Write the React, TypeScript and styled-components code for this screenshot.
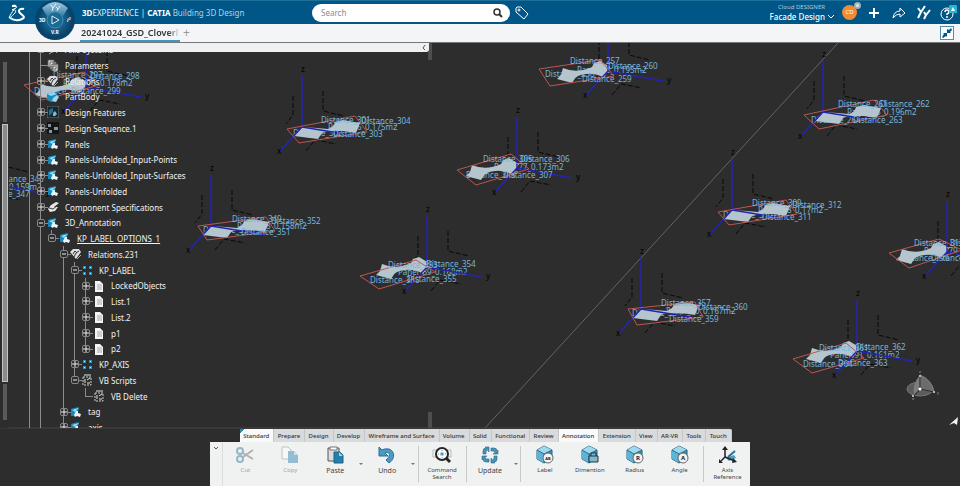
import React from "react";
import styled, { createGlobalStyle, css } from "styled-components";

const GlobalStyle = createGlobalStyle`
  *, *::before, *::after { box-sizing: border-box; }
  body { margin: 0; background: #2d2d2d; font-family: "Noto Sans", "Open Sans", sans-serif; }
  button, input, a { font: inherit; color: inherit; }
  button { border: 0; padding: 0; background: none; }
  svg { display: block; }
`;

/* ---------- layout ---------- */

const Shell = styled.div`
  display: flex;
  flex-direction: column;
  height: 100vh;
  overflow: hidden;
`;

const Header = styled.header`
  position: relative;
  z-index: 2;
  display: flex;
  flex: none;
  align-items: center;
  height: 24px;
  background: #005686;
  border-top: 1px solid #1b6f99;
  color: #fff;
`;

const HeaderSide = styled.div<{ $end?: boolean }>`
  display: flex;
  flex: ${(p) => (p.$end ? "1" : "0 0 32.5%")};
  align-items: center;
  justify-content: ${(p) => (p.$end ? "flex-end" : "flex-start")};
  gap: ${(p) => (p.$end ? "8px" : "0")};
  padding: ${(p) => (p.$end ? "0 3px 0 0" : "0 0 0 8px")};
  white-space: nowrap;
`;

const CompassButton = styled.button`
  position: absolute;
  left: 34px;
  top: -2px;
  width: 42px;
  height: 42px;
`;

const Brand = styled.h1`
  margin: 0 0 0 56px;
  font: 400 8px/16px "Noto Sans", sans-serif;
  color: #e4eff6;
  b { color: #fff; }
  small { font-size: 8px; color: #b3d1e4; }
`;

const SearchArea = styled.div`
  display: flex;
  align-items: center;
  gap: 3px;
`;

const SearchForm = styled.form`
  display: flex;
  align-items: center;
  width: 198px;
  height: 18px;
  padding: 0 4px 0 9px;
  border-radius: 9px;
  background: #fff;
  color: #333;
`;

const SearchInput = styled.input`
  flex: 1;
  min-width: 0;
  padding: 0;
  border: 0;
  outline: 0;
  background: none;
  font-size: 8px;
  &::placeholder { color: #8b8b8b; opacity: 1; }
`;

const RoleButton = styled.button`
  display: grid;
  justify-items: end;
  font-size: 8px;
  line-height: 12px;
  small { margin-right: 9px; font-size: 6px; line-height: 8px; color: #a9cbe0; }
  span { display: flex; align-items: center; gap: 3px; font-weight: 500; }
`;

const IconButton = styled.button`
  display: grid;
  place-items: center;
  width: 17px;
  height: 18px;
`;

const Avatar = styled.button`
  position: relative;
  width: 15px;
  height: 15px;
  border-radius: 50%;
  background: #f28b30;
  color: #fff;
  font-size: 6px;
  line-height: 15px;
  &::after {
    content: "";
    position: absolute;
    right: -4px;
    top: -3px;
    width: 7px;
    height: 7px;
    border: 2px solid #9fb1bb;
    border-radius: 50%;
    background: #dde5ea;
  }
`;

const DocumentBar = styled.nav`
  display: flex;
  flex: none;
  align-items: stretch;
  height: 19px;
  padding: 0 6px 0 80px;
  background: #f4f5f7;
  border-bottom: 1px solid #777;
`;

const DocumentTab = styled.a`
  width: 100px;
  padding: 0 0 0 1px;
  overflow: hidden;
  border-bottom: 2px solid #3c97c6;
  color: #333;
  font: 600 9px/17px "Noto Sans", sans-serif;
  mask-image: linear-gradient(#000, #000), linear-gradient(90deg, #000 88%, transparent);
  mask-size: 100% 2px, 100% 17px;
  mask-position: bottom, top;
  mask-repeat: no-repeat;
  text-decoration: none;
  white-space: nowrap;
`;

const NewTab = styled.button`
  width: 13px;
  color: #999;
  font-size: 12px;
  line-height: 16px;
`;

const RestoreButton = styled.button`
  align-self: center;
  display: grid;
  place-items: center;
  width: 14px;
  height: 14px;
  margin-left: auto;
  border: 1px solid #4d8db3;
  background: #fff;
`;

const Workspace = styled.main`
  position: relative;
  display: flex;
  flex: 1;
  flex-direction: column;
  min-height: 0;
  background: #2d2d2d;
`;

const SceneSvg = styled.svg`
  position: absolute;
  inset: 0;
  width: 100%;
  height: 100%;
  font-family: "Noto Sans", sans-serif;
`;

/* ---------- tree ---------- */

const TreePanel = styled.aside`
  position: relative;
  display: flex;
  flex: 1;
  flex-direction: column;
  width: 45%;
  min-height: 0;
`;

const TreeTop = styled.div`
  display: flex;
  flex: none;
  align-items: center;
  justify-content: flex-end;
  height: 9px;
  margin-right: 3px;
  padding-right: 3px;
  border-radius: 0 0 3px 0;
  background: #f0f0f0;
  color: #555;
`;

const TreeBody = styled.div`
  display: flex;
  flex: 1;
  min-height: 0;
  overflow: hidden;
`;

const Scrollbar = styled.div`
  display: grid;
  flex: none;
  grid-template-rows: 60fr 258fr 36fr;
  justify-items: center;
  gap: 2px;
  width: 9px;
  padding: 10px 0 8px;
  background: #2d2d2d;
  span { width: 4px; background: #5a5a5a; }
  span:nth-child(2) { width: 6px; border: 1px solid #c4c4c4; background: #8a8a8a; }
`;

const TreeList = styled.ul`
  flex: 1;
  margin: -11px 0 0 15px;
  padding: 0;
  list-style: none;
`;

const TreeRow = styled.li`
  display: flex;
  align-items: center;
  height: 16px;
  &:nth-child(4n) { height: 15px; }
`;

const line = css`
  content: "";
  position: absolute;
  background: #8b8b8b;
`;

const Rail = styled.span<{ $wide?: boolean; $span: "none" | "full" | "up" }>`
  position: relative;
  flex: none;
  align-self: stretch;
  width: ${(p) => (p.$wide ? "12px" : "11px")};
  &::before {
    ${line}
    display: ${(p) => (p.$span === "none" ? "none" : "block")};
    left: 5px;
    top: 0;
    bottom: ${(p) => (p.$span === "up" ? "50%" : "0")};
    width: 1px;
  }
`;

const Branch = styled(Rail)`
  &::after {
    ${line}
    left: 5px;
    top: 50%;
    width: 8px;
    height: 1px;
  }
`;

const Toggle = styled.button`
  position: absolute;
  z-index: 1;
  left: 2px;
  top: 4px;
  display: grid;
  place-items: center;
  width: 8px;
  height: 8px;
  border: 1px solid #888;
  border-radius: 2px;
  background: #2d2d2d;
  color: #eee;
`;

const NodeIcon = styled.span`
  flex: none;
  width: 12px;
  height: 12px;
  margin: 0 6px 0 1px;
`;

const NodeLabel = styled.span<{ $underlined?: boolean }>`
  font-size: 8px;
  line-height: 15px;
  color: #f2f2f2;
  white-space: nowrap;
  text-decoration: ${(p) => (p.$underlined ? "underline" : "none")};
`;

/* ---------- action bar ---------- */

const ActionDock = styled.section`
  position: relative;
  flex: none;
  align-self: center;
  margin-top: 1px;
  width: 540px;
`;

const TabStrip = styled.div`
  display: flex;
  margin: 0 18px 0 30px;
  border-radius: 0 2px 0 0;
  overflow: hidden;
`;

const SectionTab = styled.button<{ $active?: boolean; $first?: boolean }>`
  flex: 1 0 auto;
  height: 13px;
  padding: 0 4px 0 3px;
  border-right: 1px solid #c3c7c7;
  background: ${(p) =>
    p.$first ? "linear-gradient(135deg, #2e86b5 3px, #fafafa 3px)" : p.$active ? "#fafafa" : "#d8dadb"};
  color: #333;
  font: 500 6px/12px "Noto Sans", sans-serif;
  white-space: nowrap;
`;

const ActionBody = styled.div`
  display: flex;
  height: 44px;
  background: #f0f1f1;
  color: #444;
`;

const CollapseButton = styled.button`
  display: grid;
  flex: none;
  justify-items: center;
  align-content: start;
  width: 13px;
  padding-top: 4px;
  border-right: 1px solid #dcdcdc;
`;

const ActionButton = styled.button<{ $strong?: boolean }>`
  display: flex;
  flex-direction: column;
  align-items: center;
  width: 45px;
  padding-top: 3px;
  font-size: ${(p) => (p.$strong ? "7px" : "6px")};
  line-height: 7px;
  &:disabled { color: #a5a5a5; }
  &:disabled svg { opacity: 0.45; }
  svg { margin-bottom: 2px; }
`;

const MoreButton = styled.button`
  flex: none;
  width: 7px;
  &::after {
    content: "";
    display: block;
    width: 4px;
    margin: 2px auto 0;
    border: 2px solid transparent;
    border-top-color: #777;
  }
`;

const Divider = styled.span`
  flex: none;
  width: 1px;
  margin: 4px 1px;
  background: #c8c8c8;
`;

/* ---------- 3D scene ---------- */

type Pt = [number, number];
type Caption = [string, number, number];
type Marker = {
  kind: "left" | "right";
  at: Pt;
  outline: string;
  under: Caption[];
  over: Caption[];
};

const markers: Marker[] = [
  { kind: "left", at: [608, 71], outline: "539,69 600,60 614,76 550,86",
    under: [["Panel_65_0.195m2", 577, 73], ["Distance_258", 545, 77]],
    over: [["Distance_257", 570, 64], ["Distance_260", 608, 69], ["Distance_259", 582, 82]] },
  { kind: "left", at: [517, 168], outline: "457,170 511,154 529,169 476,185",
    under: [["Panel_77_0.173m2", 494, 170], ["Distance_308", 466, 178]],
    over: [["Distance_305", 483, 162], ["Distance_306", 520, 162], ["Distance_307", 503, 178]] },
  { kind: "left", at: [427, 267], outline: "360,276 416,260 435,272 379,289",
    under: [["Panel_89_0.168m2", 398, 275], ["Distance_356", 370, 283]],
    over: [["Distance_353", 388, 268], ["Distance_354", 426, 267], ["Distance_355", 407, 282]] },
  { kind: "left", at: [947, 252], outline: "889,253 939,239 962,250 909,268",
    under: [["Panel_79_0.171m2", 924, 254], ["Distance_316", 900, 261]],
    over: [["Distance_313", 914, 246], ["Distance_314", 950, 246], ["Distance_315", 931, 261]] },
  { kind: "left", at: [857, 351], outline: "793,359 846,343 864,358 812,373",
    under: [["Panel_91_0.161m2", 830, 358], ["Distance_364", 803, 367]],
    over: [["Distance_361", 819, 351], ["Distance_362", 856, 350], ["Distance_363", 838, 366]] },
  { kind: "left", at: [86, 87], outline: "24,85 84,72 100,85 42,100",
    under: [["Panel_75_0.178m2", 63, 86], ["Distance_300", 34, 94]],
    over: [["Distance_297", 53, 78], ["Distance_298", 90, 79], ["Distance_299", 71, 94]] },
  { kind: "left", at: [-13, 183], outline: "-76,184 -20,170 -2,184 -54,200",
    under: [["Panel_87_0.159m2", -28, 190]],
    over: [["Distance_346", -6, 182], ["Distance_347", -20, 197]] },
  { kind: "right", at: [302, 127], outline: "287,129 355,116 367,132 299,143",
    under: [["Panel_76_0.175m2", 328, 130], ["Distance_302", 293, 136]],
    over: [["Distance_301", 321, 123], ["Distance_304", 361, 124], ["Distance_303", 333, 137]] },
  { kind: "right", at: [211, 226], outline: "198,226 266,217 275,231 207,240",
    under: [["Panel_88_0.158m2", 237, 229], ["Distance_350", 203, 233]],
    over: [["Distance_349", 232, 222], ["Distance_352", 271, 224], ["Distance_351", 241, 235]] },
  { kind: "right", at: [823, 112], outline: "804,115 874,100 887,115 819,129",
    under: [["Panel_66_0.196m2", 847, 115], ["Distance_264", 811, 123]],
    over: [["Distance_261", 838, 107], ["Distance_262", 880, 107], ["Distance_263", 853, 123]] },
  { kind: "right", at: [732, 210], outline: "718,212 786,200 797,214 729,225",
    under: [["Panel_78_0.17m2", 758, 213], ["Distance_310", 723, 218]],
    over: [["Distance_309", 752, 206], ["Distance_312", 792, 208], ["Distance_311", 762, 220]] },
  { kind: "right", at: [641, 309], outline: "628,309 695,302 703,317 637,325",
    under: [["Panel_90_0.167m2", 666, 314], ["Distance_358", 632, 316]],
    over: [["Distance_357", 661, 306], ["Distance_360", 698, 310], ["Distance_359", 669, 322]] },
];

const surfaces = {
  left: "M-45-3Q-31 3-16-4L-14-8-8-10 2-4-4 7Q-12 2-22 3-32 4-34 9L-36 12-51 8-47 4Z",
  right: "M-8 8 0 0 15 1 26 2Q32 0 33-5L41-7 58-4 54 6 41 4 26 4 20 6 16 12-8 9Z",
};

const captions = (list: Caption[]) =>
  list.map(([text, x, y]) => (
    <text key={text} x={x} y={y} fill="#78b6de" fontSize="8">{text}</text>
  ));

function SceneMarker({ kind, at: [x, y], outline, under, over }: Marker) {
  const left = kind === "left";
  return (
    <g>
      {captions(under)}
      <g transform={`translate(${x} ${y})`}>
        <path
          d="M-9-31V-12L-16-3M21-36V-16L42-11M4 24 13 13 34 17"
          fill="none" stroke="#080808" strokeDasharray="5 2"
        />
        <path d={surfaces[kind]} fill="#b5c5ce" />
        <path
          d={left ? "M0-51V0L-22 24M0 0 55 10" : "M0-51V0L-22 24M0 0 55 9"}
          fill="none" stroke="#2424b4" strokeWidth="1.5"
        />
        <g fill="#050505" fontSize="8" fontWeight="500">
          <text x="-1" y="-55">z</text>
          <text x="-25" y="27">x</text>
          {left && <text x="59" y="12">y</text>}
        </g>
      </g>
      <polygon points={outline} fill="none" stroke="#bd5552" />
      {captions(over)}
    </g>
  );
}

function Scene() {
  return (
    <SceneSvg viewBox="0 43 960 443" preserveAspectRatio="xMidYMin slice" aria-label="3D view">
      <path d="M838 43 485 428" stroke="#646464" />
      <path d="M429 43V60M431 43V60M429 412V428M431 412V428" stroke="#707070" />
      <path d="M0 428H730" stroke="#4a4545" />
      {markers.map((m) => <SceneMarker key={m.over[0][0]} {...m} />)}
      <g>
        <ellipse cx="920" cy="389" rx="13" ry="7" fill="#5c5c5c" stroke="#777" />
        <path d="M920 375Q932 380 934 392L920 389Z" fill="#6c6c6c" stroke="#888" strokeWidth="1" />
        <path d="M920 389 914 395Q912 384 920 375" fill="#7c7c7c" />
        <path d="M920 375V389L914 396M920 389 934 392" fill="none" stroke="#222" />
        <circle cx="920" cy="389" r="1.5" fill="#fff" />
        <circle cx="920" cy="376" r="1" fill="#ddd" />
        <circle cx="934" cy="392" r="1" fill="#ddd" />
        <circle cx="913" cy="396" r="1" fill="#ddd" />
        <g fill="#aaa" fontSize="4"><text x="919" y="373">z</text><text x="937" y="394">y</text><text x="912" y="400">x</text></g>
        <path d="M949 425 958 417 957 425 954 423Z" fill="#f2f2f2" />
      </g>
    </SceneSvg>
  );
}

/* ---------- tree data ---------- */

type IconKind = "body" | "params" | "relations" | "part" | "features" | "sequence" | "specs" | "grid" | "doc" | "script" | "axis";
type TreeNode = { label: string; icon: IconKind; toggle?: "+" | "-"; rails: string; underlined?: boolean };

/* rails: one letter per level, f = continuous line, u = upper half only, n = none */
const nodes: TreeNode[] = [
  { label: "Axis Systems", icon: "axis", toggle: "+", rails: "f" },
  { label: "Parameters", icon: "params", rails: "f" },
  { label: "Relations", icon: "relations", toggle: "+", rails: "f" },
  { label: "PartBody", icon: "part", rails: "f" },
  { label: "Design Features", icon: "features", toggle: "+", rails: "f" },
  { label: "Design Sequence.1", icon: "sequence", toggle: "+", rails: "f" },
  { label: "Panels", icon: "body", toggle: "+", rails: "f" },
  { label: "Panels-Unfolded_Input-Points", icon: "body", toggle: "+", rails: "f" },
  { label: "Panels-Unfolded_Input-Surfaces", icon: "body", toggle: "+", rails: "f" },
  { label: "Panels-Unfolded", icon: "body", toggle: "+", rails: "f" },
  { label: "Component Specifications", icon: "specs", toggle: "+", rails: "f" },
  { label: "3D_Annotation", icon: "body", toggle: "-", rails: "f" },
  { label: "KP_LABEL_OPTIONS_1", icon: "body", toggle: "-", rails: "fu", underlined: true },
  { label: "Relations.231", icon: "relations", toggle: "-", rails: "fnf" },
  { label: "KP_LABEL", icon: "grid", toggle: "-", rails: "fnff" },
  { label: "LockedObjects", icon: "doc", toggle: "+", rails: "fnfff" },
  { label: "List.1", icon: "doc", toggle: "+", rails: "fnfff" },
  { label: "List.2", icon: "doc", toggle: "+", rails: "fnfff" },
  { label: "p1", icon: "doc", toggle: "+", rails: "fnfff" },
  { label: "p2", icon: "doc", toggle: "+", rails: "fnffu" },
  { label: "KP_AXIS", icon: "grid", toggle: "+", rails: "fnff" },
  { label: "VB Scripts", icon: "script", toggle: "-", rails: "fnfu" },
  { label: "VB Delete", icon: "script", rails: "fnfnu" },
  { label: "tag", icon: "body", toggle: "+", rails: "fnf" },
  { label: "axis", icon: "body", toggle: "+", rails: "fnf" },
];

const icons: Record<IconKind, React.ReactNode> = {
  body: (
    <>
      <path d="M1 3 4 2 9 1 8 6 4 10 1 10Z" fill="#1687b8" />
      <path d="M2 4 5 3 9 2 5 6Z" fill="#8bd8f4" />
      <path d="M4 9 6 5 8 5 8 7 11 8 10 11 7 10 5 11Z" fill="#e9f3f7" />
    </>
  ),
  params: (
    <path d="M1 1H7V8H1ZM3 3H9V10H3ZM5 5H11V12H5Z" fill="#eee" stroke="#555" strokeWidth="1" />
  ),
  relations: (
    <>
      <path d="M0 4 3 1 9 1 11 4 6 11Z" fill="#ddd" />
      <path d="M3 6 5 3 7 5M4 9 6 5 9 3" fill="none" stroke="#333" />
      <path d="M7 11 11 7" stroke="#aaa" />
    </>
  ),
  part: (
    <>
      <path d="M0 3 6 1 10 3 9 10 4 11 0 9Z" fill="#1d8abb" />
      <path d="M0 3 6 1 10 3 4 5Z" fill="#8bd8f4" />
      <path d="M6 7 10 4 12 6 9 11 5 10Z" fill="#9fd6eb" />
    </>
  ),
  features: (
    <>
      <rect x="0" y="0" width="12" height="12" fill="#17282f" stroke="#68747a" />
      <path d="M2 4 6 2V6L2 10Z" fill="#1d7397" />
      <path d="M6 7 8 5 10 8 8 10 6 10Z" fill="#86b8cc" />
    </>
  ),
  sequence: (
    <>
      <rect width="12" height="12" fill="#141414" />
      <path d="M1 2H4V5H1ZM2 8H5V11H2ZM7 5H11V8H7Z" fill="#87949b" />
    </>
  ),
  specs: (
    <>
      <path d="M1 8 4 4 9 1 12 2 7 6 11 6 8 10 3 11Z" fill="#e6e6e6" />
      <path d="M2 7 6 8 10 5" fill="none" stroke="#444" />
    </>
  ),
  grid: (
    <>
      <path d="M2 2H5V5H2ZM8 2H11V5H8ZM2 8H5V11H2ZM8 8H11V11H8Z" fill="#2b8fc6" />
      <path d="M3 3H4V4H3ZM9 3H10V4H9ZM3 9H4V10H3ZM9 9H10V10H9Z" fill="#c9ecfb" />
    </>
  ),
  doc: (
    <>
      <path d="M2 1H7L10 4V12H2Z" fill="#f4f4f4" />
      <path d="M4 5H9M4 7H9M4 9H9" stroke="#a8a8a8" />
    </>
  ),
  script: (
    <>
      <path d="M2 3H10V11H2Z" fill="none" stroke="#ccc" strokeDasharray="2 1" />
      <path d="M4 5V9M6 6 9 4M6 9H9M3 1H10" stroke="#e4e4e4" />
    </>
  ),
  axis: <path d="M2 3 5 9 10 8M5 9 2 11M7 4 10 10" fill="none" stroke="#bbb" />,
};

function TreeItem({ label, icon, toggle, rails, underlined }: TreeNode) {
  const last = rails.length - 1;
  const spans = { f: "full", u: "up", n: "none" } as const;
  return (
    <TreeRow>
      <Rail $span="full" />
      {rails.split("").map((r, i) => {
        const span = spans[r as keyof typeof spans];
        const wide = i === 1 || i === 4;
        if (i < last) return <Rail key={i} $span={span} $wide={wide} />;
        return (
          <Branch key={i} $span={span} $wide={wide}>
            {toggle && (
              <Toggle aria-label={toggle === "+" ? `Expand ${label}` : `Collapse ${label}`}>
                <svg width="6" height="6" viewBox="0 0 6 6" stroke="currentColor">
                  <path d={toggle === "+" ? "M0 3H6M3 0V6" : "M1 3H5"} />
                </svg>
              </Toggle>
            )}
          </Branch>
        );
      })}
      <NodeIcon>
        <svg width="12" height="12" viewBox="0 0 12 12">{icons[icon]}</svg>
      </NodeIcon>
      <NodeLabel $underlined={underlined}>{label}</NodeLabel>
    </TreeRow>
  );
}

/* ---------- action icons ---------- */

const Cube = ({ children }: { children: React.ReactNode }) => (
  <svg width="20" height="20" viewBox="0 0 20 20">
    <path d="M2 5 9 1 17 5 17 13 9 18 2 14Z" fill="#3d8db4" stroke="#23617f" />
    <path d="M2 5 9 1 17 5 9 9Z" fill="#a0d9ee" />
    <path d="M2 5 9 9V18L2 14Z" fill="#5fb4d6" />
    <path d="M2 5 9 9 17 5M9 9V18" fill="none" stroke="#2b6f90" />
    {children}
  </svg>
);

const Badge = ({ text }: { text: string }) => (
  <>
    <circle cx="13" cy="13" r="5" fill="#f4f4f4" stroke="#666" />
    <text x="13" y="15" fontSize={text.length > 1 ? 4 : 6} fontWeight="700" textAnchor="middle" fill="#222">{text}</text>
  </>
);

const CutIcon = () => (
  <svg width="20" height="20" viewBox="0 0 20 20" fill="none">
    <g stroke="#25749b" strokeWidth="2"><circle cx="5" cy="6" r="3" /><circle cx="5" cy="14" r="3" /></g>
    <path d="M8 8 18 14M8 12 18 5" stroke="#666" strokeWidth="2" />
  </svg>
);
const CopyIcon = () => (
  <svg width="20" height="20" viewBox="0 0 20 20">
    <path d="M2 2H8L11 5V14H2Z" fill="#fff" stroke="#888" />
    <path d="M8 6H14L18 10V18H8Z" fill="#2580ab" /><path d="M14 6V10H18Z" fill="#9bd0e6" />
  </svg>
);
const PasteIcon = () => (
  <svg width="20" height="20" viewBox="0 0 20 20">
    <path d="M3 3H14V16H3Z" fill="#ddd" stroke="#555" /><path d="M5 2H12V5H5Z" fill="#fff" stroke="#777" />
    <path d="M9 7H15L18 10V18H9Z" fill="#2580ab" stroke="#1b6287" /><path d="M14 7V11H18Z" fill="#9bd0e6" />
  </svg>
);
const UndoIcon = () => (
  <svg width="20" height="20" viewBox="0 0 20 20">
    <path d="M2 2V11H11L8 8C12 6 15 10 9 15L12 18C21 12 16 0 5 5Z" fill="#4b9bc3" stroke="#276f95" />
  </svg>
);
const CommandIcon = () => (
  <svg width="20" height="20" viewBox="0 0 20 20" fill="none">
    <path d="M1 5H6V12H1ZM15 5H19V12H15Z" stroke="#bbb" />
    <circle cx="10" cy="9" r="6" fill="#fff" stroke="#252525" strokeWidth="2" />
    <path d="M14 13 18 17" stroke="#252525" strokeWidth="3" />
    <rect x="8.5" y="7.5" width="3" height="3" fill="#3f9ec8" /><path d="M10 5V6M10 12V13M6 9H7M13 9H14" stroke="#888" />
  </svg>
);
const UpdateIcon = () => (
  <svg width="20" height="20" viewBox="0 0 20 20">
    <g fill="#4492ba" stroke="#28698b" strokeWidth="0.6">
      {[0, 90, 180, 270].map((a) => (
        <path key={a} transform={`rotate(${a} 10 10)`} d="M3 9V6Q3 3 6 3L5 2H9V7L8 5Q6 5 6 7V9Z" />
      ))}
    </g>
  </svg>
);
const AxisIcon = () => (
  <svg width="20" height="20" viewBox="0 0 20 20" fill="none">
    <path d="M8 13 16 10 18 13 11 16Z" fill="#4b9bc3" /><path d="M10 12 17 6" stroke="#276f95" strokeWidth="2" />
    <path d="M7 3V12L3 16M7 12 17 16" stroke="#222" strokeWidth="1.5" />
    <path d="M4 5 7 1 10 5ZM1 14V18H5ZM15 13 19 17 14 18Z" fill="#222" />
  </svg>
);

const sectionTabs = ["Standard", "Prepare", "Design", "Develop", "Wireframe and Surface", "Volume", "Solid", "Functional", "Review", "Annotation", "Extension", "View", "AR-VR", "Tools", "Touch"];

function ActionBar() {
  return (
    <ActionDock aria-label="Action bar">
      <TabStrip>
        {sectionTabs.map((t) => (
          <SectionTab key={t} $first={t === "Standard"} $active={t === "Annotation"}>{t}</SectionTab>
        ))}
      </TabStrip>
      <ActionBody>
        <CollapseButton aria-label="Collapse action bar">
          <svg width="6" height="4" viewBox="0 0 6 4"><path d="M1 1 3 3 5 1" fill="none" stroke="#555" /></svg>
        </CollapseButton>
        <ActionButton disabled><CutIcon />Cut</ActionButton>
        <ActionButton disabled><CopyIcon />Copy</ActionButton>
        <ActionButton $strong><PasteIcon />Paste</ActionButton>
        <MoreButton aria-label="Paste options" />
        <ActionButton $strong><UndoIcon />Undo</ActionButton>
        <MoreButton aria-label="Undo history" />
        <Divider />
        <ActionButton><CommandIcon />Command<br />Search</ActionButton>
        <Divider />
        <ActionButton $strong><UpdateIcon />Update</ActionButton>
        <MoreButton aria-label="Update options" />
        <Divider />
        <ActionButton><Cube><Badge text="AB" /></Cube>Label</ActionButton>
        <ActionButton>
          <Cube><path d="M9 11H18V17H9ZM11 11V8H16V11" fill="#79bcd6" stroke="#333" /></Cube>
          Dimention
        </ActionButton>
        <ActionButton><Cube><Badge text="R" /></Cube>Radius</ActionButton>
        <ActionButton><Cube><Badge text="A" /></Cube>Angle</ActionButton>
        <Divider />
        <ActionButton><AxisIcon />Axis<br />Reference</ActionButton>
      </ActionBody>
    </ActionDock>
  );
}

/* ---------- header ---------- */

const Logo = () => (
  <svg width="18" height="18" viewBox="0 0 18 18" fill="none" stroke="#fff" strokeWidth="1">
    <path d="M4 2C7 0 10 2 8 4L4 6C8 5 9 7 6 10 4 12 2 14 1 14 2 11 4 8 6 6" />
    <path d="M4 2 8 2" strokeWidth="2" />
    <path d="M16 5C13 4 9 6 12 9 15 12 18 13 14 15 10 17 5 16 2 14" strokeWidth="2" />
  </svg>
);

const Compass = () => (
  <svg width="42" height="42" viewBox="0 0 42 42">
    <defs>
      <radialGradient id="dial"><stop offset="0" stopColor="#2884b3" /><stop offset="1" stopColor="#073f66" /></radialGradient>
      <linearGradient id="shine" x2="0" y2="1"><stop offset="0" stopColor="#9fc9df" /><stop offset="1" stopColor="#367fa7" /></linearGradient>
    </defs>
    <circle cx="21" cy="21" r="20" fill="#0b4369" />
    <circle cx="21" cy="21" r="18" fill="url(#dial)" />
    <path d="M8 9Q21-3 34 9L29 17Q21 10 13 17Z" fill="url(#shine)" />
    <circle cx="21" cy="21" r="8" fill="#1a6a98" stroke="#3f8bb3" />
    <path d="M18 17 25 21 18 25Z" fill="#155b86" stroke="#e1eef5" />
    <g fill="#fff" fontSize="5" fontWeight="700" fontFamily="Noto Sans">
      <text x="5" y="23">3D</text><text x="17" y="35">V.R</text><text x="33" y="23" fontStyle="italic">i²</text>
    </g>
    <path d="M17 6 19 9 22 5M19 9 18 12M22 8 24 10 26 7M24 10 23 12" fill="none" stroke="#e8f2f7" />
  </svg>
);

export default function App() {
  return (
    <Shell>
      <GlobalStyle />
      <Header>
        <HeaderSide>
          <Logo />
          <Brand><b>3D</b>EXPERIENCE | <b>CATIA</b> <small>Building 3D Design</small></Brand>
          <CompassButton aria-label="Compass"><Compass /></CompassButton>
        </HeaderSide>
        <SearchArea>
          <SearchForm role="search">
            <SearchInput aria-label="Search" placeholder="Search" />
            <IconButton type="button" aria-label="Run search">
              <svg width="10" height="10" viewBox="0 0 10 10" fill="none" stroke="#333">
                <circle cx="4" cy="4" r="3" strokeWidth="1.5" /><path d="M6 6 9 9" strokeWidth="2" />
              </svg>
            </IconButton>
          </SearchForm>
          <IconButton aria-label="Tags">
            <svg width="14" height="14" viewBox="0 0 14 14" fill="none" stroke="#fff">
              <path d="M1 2 2 1H6L13 8 9 13 1 6Z" /><circle cx="4" cy="4" r="1" />
            </svg>
          </IconButton>
        </SearchArea>
        <HeaderSide $end>
          <RoleButton>
            <small>Cloud DESIGNER</small>
            <span>Facade Design
              <svg width="6" height="4" viewBox="0 0 6 4" fill="none" stroke="#fff"><path d="M0 0 3 3 6 0" /></svg>
            </span>
          </RoleButton>
          <Avatar aria-label="Profile">CD</Avatar>
          <IconButton aria-label="Add">
            <svg width="12" height="12" viewBox="0 0 12 12" stroke="#fff" strokeWidth="2"><path d="M6 1V11M1 6H11" /></svg>
          </IconButton>
          <IconButton aria-label="Share">
            <svg width="14" height="14" viewBox="0 0 14 14" fill="none" stroke="#fff"><path d="M1 12Q2 5 8 5V2L13 7 8 11V8Q4 8 1 12Z" /></svg>
          </IconButton>
          <IconButton aria-label="Communities">
            <svg width="15" height="15" viewBox="0 0 15 15" fill="none" stroke="#fff" strokeWidth="2">
              <path d="M2 3 5 7 9 1M5 7 2 13M8 7 10 10 14 5M10 10 8 14" />
            </svg>
          </IconButton>
          <IconButton aria-label="Help">
            <svg width="17" height="16" viewBox="0 0 17 16" fill="none" stroke="#fff">
              <circle cx="7" cy="9" r="6" /><path d="M5 7Q5 5 7 5T9 7Q9 8 7 9V10M7 11V13" strokeWidth="1.5" />
              <rect x="9" y="0" width="8" height="8" rx="1" fill="#26b5d5" stroke="none" /><path d="M11 6 13 2 15 6Z" fill="#fff" stroke="none" />
            </svg>
          </IconButton>
        </HeaderSide>
      </Header>
      <DocumentBar aria-label="Documents">
        <DocumentTab href="#document">20241024_GSD_Cloverl</DocumentTab>
        <NewTab aria-label="New tab">+</NewTab>
        <RestoreButton aria-label="Exit full view">
          <svg width="12" height="12" viewBox="0 0 12 12" fill="#005686">
            <path d="M6 2V6H10L9 5 11 3 10 1 8 3ZM2 6H6V10L5 9 2 11 1 10 3 7Z" />
          </svg>
        </RestoreButton>
      </DocumentBar>
      <Workspace>
        <Scene />
        <TreePanel aria-label="Specification tree">
          <TreeTop>
            <button aria-label="Hide tree">
              <svg width="5" height="7" viewBox="0 0 5 7" fill="none" stroke="#555"><path d="M4 1 2 4 4 6" /></svg>
            </button>
          </TreeTop>
          <TreeBody>
            <Scrollbar><span /><span /><span /></Scrollbar>
            <TreeList>{nodes.map((n) => <TreeItem key={n.label} {...n} />)}</TreeList>
          </TreeBody>
        </TreePanel>
        <ActionBar />
      </Workspace>
    </Shell>
  );
}
